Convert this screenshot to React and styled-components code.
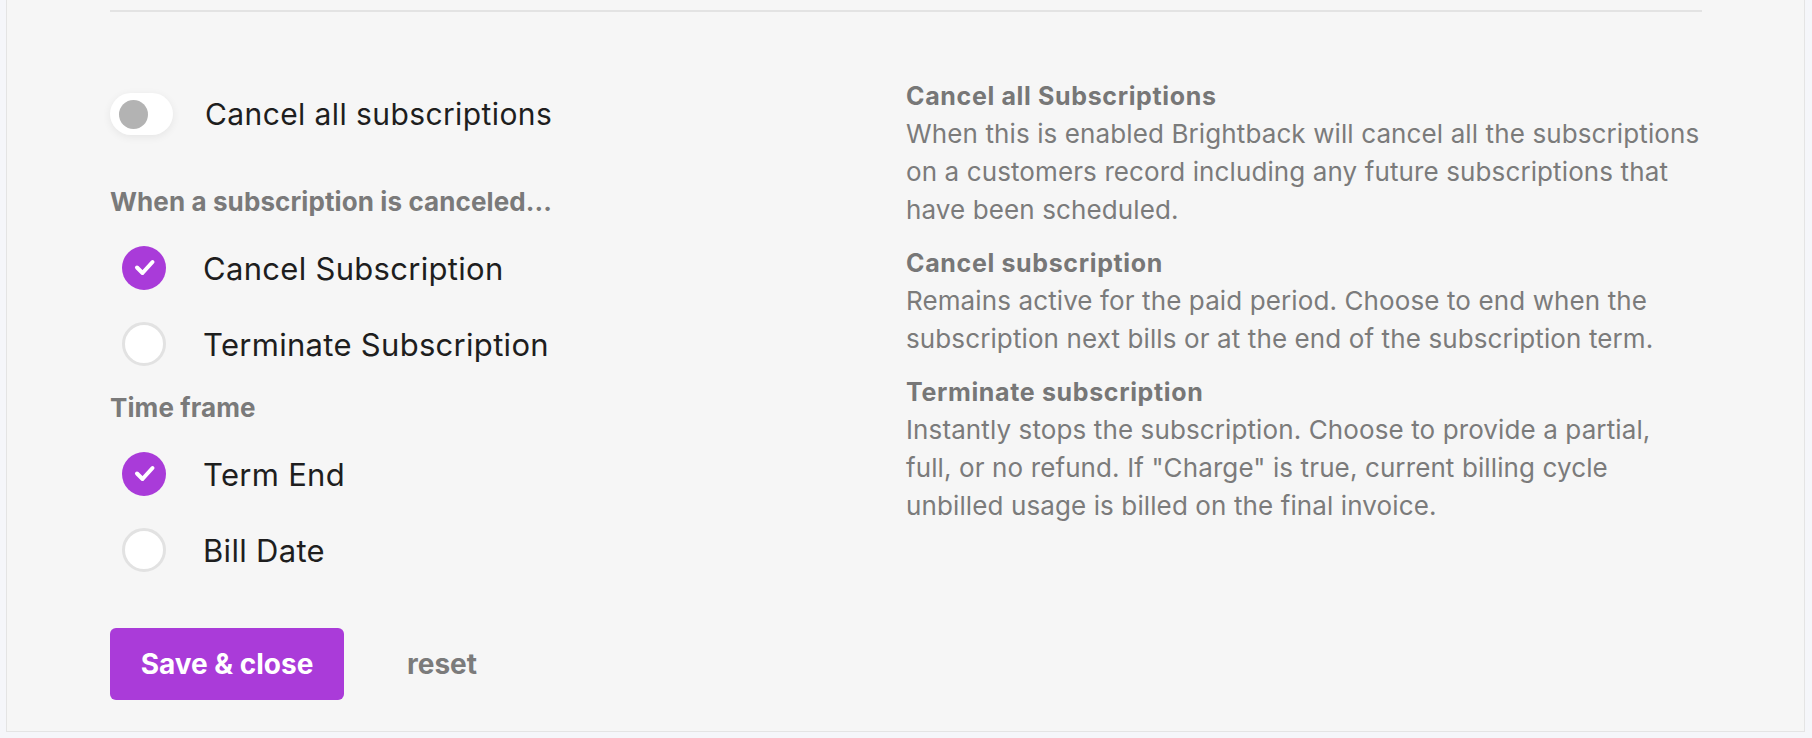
import React from "react";
import styled, { createGlobalStyle } from "styled-components";

const Global = createGlobalStyle`
  html, body { margin: 0; padding: 0; background: #f5f6fa; }
  body { font-family: Inter, "Noto Sans", "Liberation Sans", sans-serif; -webkit-font-smoothing: antialiased; }
  * { box-sizing: border-box; }
`;

const Page = styled.div`
  padding: 0 7px 6px 6px;
`;

const Panel = styled.section`
  background: #f6f6f6;
  border: 1px solid #e4e4e4;
  border-top: none;
  padding: 10px 102px 31px 103px;
`;

const Divider = styled.div`
  height: 2px;
  background: #e3e3e3;
`;

const Columns = styled.div`
  display: grid;
  grid-template-columns: 1fr 1fr;
`;

const LeftCol = styled.div`
  padding-top: 81px;
  display: flex;
  flex-direction: column;
`;

const RightCol = styled.div`
  padding-top: 65px;
  display: flex;
  flex-direction: column;
  gap: 15px;
`;

const ToggleRow = styled.label`
  display: flex;
  align-items: center;
  gap: 32px;
  height: 42px;
`;

const Track = styled.span`
  width: 63px;
  height: 42px;
  border-radius: 21px;
  background: #ffffff;
  box-shadow: 0 2px 8px rgba(0, 0, 0, 0.07);
  display: flex;
  align-items: center;
  padding-left: 9px;
  flex: none;
`;

const Knob = styled.span`
  width: 29px;
  height: 29px;
  border-radius: 50%;
  background: #b3b3b3;
`;

const OptionText = styled.span`
  font-size: ${(p) => (p.$large ? 31 : 30)}px;
  letter-spacing: ${(p) => (p.$large ? 0.3 : 0.4)}px;
  color: #1e1e1e;
  line-height: 1;
`;

const SectionLabel = styled.div`
  margin-top: ${(p) => p.$mt}px;
  font-size: 26px;
  font-weight: 700;
  letter-spacing: 0.1px;
  color: #7a7a7a;
  line-height: 30px;
`;

const RadioList = styled.div`
  margin-top: 29px;
  display: flex;
  flex-direction: column;
  gap: 32px;
`;

const RadioRow = styled.label`
  display: flex;
  align-items: center;
  gap: 37px;
  height: 44px;
  padding-left: 12px;
`;

const Circle = styled.span`
  width: 44px;
  height: 44px;
  border-radius: 50%;
  flex: none;
  display: flex;
  align-items: center;
  justify-content: center;
  background: ${(p) => (p.$checked ? "#a93bd9" : "#ffffff")};
  border: ${(p) => (p.$checked ? "none" : "3px solid #e2e2e2")};
`;

const Actions = styled.div`
  margin-top: 56px;
  display: flex;
  align-items: center;
  gap: 63px;
`;

const SaveButton = styled.button`
  width: 234px;
  height: 72px;
  border: none;
  border-radius: 6px;
  background: #aa3bd9;
  color: #ffffff;
  font-family: inherit;
  font-size: 28px;
  font-weight: 700;
  cursor: pointer;
`;

const ResetButton = styled.button`
  border: none;
  background: none;
  padding: 0;
  font-family: inherit;
  font-size: 28px;
  font-weight: 700;
  color: #7b7b7b;
  cursor: pointer;
`;

const InfoBlock = styled.div`
  display: flex;
  flex-direction: column;
`;

const InfoTitle = styled.div`
  font-size: 25px;
  font-weight: 700;
  letter-spacing: 0.65px;
  color: #777777;
  line-height: 38px;
`;

const InfoBody = styled.p`
  margin: 0;
  font-size: 26px;
  letter-spacing: 0.11px;
  color: #7b7b7b;
  line-height: 38px;
`;

const Check = () => (
  <svg width="44" height="44" viewBox="0 0 44 44" fill="none">
    <path d="M15 21.5 L20.5 27 L30.5 16" stroke="#fff" strokeWidth="4" strokeLinecap="round" strokeLinejoin="round" />
  </svg>
);

const Radio = ({ checked, label }) => (
  <RadioRow>
    <Circle $checked={checked}>{checked && <Check />}</Circle>
    <OptionText $large>{label}</OptionText>
  </RadioRow>
);

const info = [
  {
    title: "Cancel all Subscriptions",
    body: "When this is enabled Brightback will cancel all the subscriptions on a customers record including any future subscriptions that have been scheduled.",
  },
  {
    title: "Cancel subscription",
    body: "Remains active for the paid period. Choose to end when the subscription next bills or at the end of the subscription term.",
  },
  {
    title: "Terminate subscription",
    body: 'Instantly stops the subscription. Choose to provide a partial, full, or no refund. If "Charge" is true, current billing cycle unbilled usage is billed on the final invoice.',
  },
];

export default function App() {
  return (
    <Page>
      <Global />
      <Panel>
        <Divider />
        <Columns>
          <LeftCol>
            <ToggleRow>
              <Track>
                <Knob />
              </Track>
              <OptionText>Cancel all subscriptions</OptionText>
            </ToggleRow>
            <SectionLabel $mt={52}>When a subscription is canceled...</SectionLabel>
            <RadioList>
              <Radio checked label="Cancel Subscription" />
              <Radio label="Terminate Subscription" />
            </RadioList>
            <SectionLabel $mt={27}>Time frame</SectionLabel>
            <RadioList>
              <Radio checked label="Term End" />
              <Radio label="Bill Date" />
            </RadioList>
            <Actions>
              <SaveButton>Save &amp; close</SaveButton>
              <ResetButton>reset</ResetButton>
            </Actions>
          </LeftCol>
          <RightCol>
            {info.map((i) => (
              <InfoBlock key={i.title}>
                <InfoTitle>{i.title}</InfoTitle>
                <InfoBody>{i.body}</InfoBody>
              </InfoBlock>
            ))}
          </RightCol>
        </Columns>
      </Panel>
    </Page>
  );
}
